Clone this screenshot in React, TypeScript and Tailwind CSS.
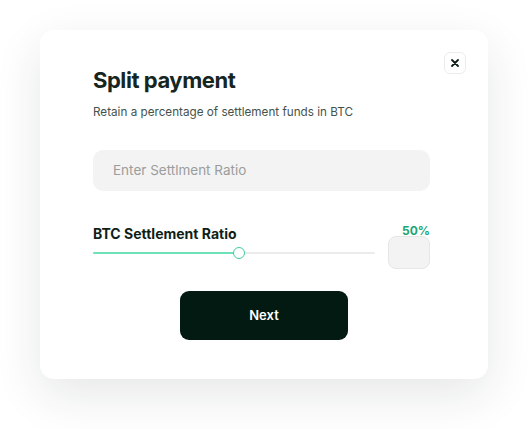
import React from 'react';

function CloseButton() {
  return (
    <button className="absolute right-[22px] top-[22px] flex h-[22px] w-[22px] items-center justify-center rounded-[6px] border border-[#ececec] bg-white">
      <svg width="8" height="8" viewBox="0 0 8 8" fill="none">
        <path d="M1 1L7 7M7 1L1 7" stroke="#0f1f18" strokeWidth="1.8" strokeLinecap="round" />
      </svg>
    </button>
  );
}

export default function App() {
  const ratio = 50;
  return (
    <div
      className="h-[429px] w-[528px] bg-white pl-[40px] pt-[30px]"
      style={{ fontFamily: 'Inter, "Noto Sans", sans-serif' }}
    >
      <div className="relative flex h-[349px] w-[448px] flex-col rounded-[14px] bg-white pl-[53px] pr-[58px] pt-[36px] shadow-[0_16px_48px_rgba(20,40,30,0.11)]">
        <CloseButton />
        <h1 className="text-[22px] font-bold leading-[28px] tracking-[-0.45px] text-[#16261f]">Split payment</h1>
        <p className="mt-[10px] text-[11.7px] leading-[16px] text-[#45524c]">
          Retain a percentage of settlement funds in BTC
        </p>
        <div className="mt-[30px] flex h-[41px] items-center rounded-[10px] bg-[#f3f3f3] px-[20px]">
          <span className="text-[13.5px] text-[#9a9d9c]">Enter Settlment Ratio</span>
        </div>
        <div className="mt-[30px] flex items-start gap-[13px]">
          <div className="flex flex-1 flex-col pt-[4px]">
            <span className="text-[14px] font-bold leading-[18px] text-[#0f1f18]">BTC Settlement Ratio</span>
            <div className="relative mt-[8px] h-[4px]">
              <div className="absolute left-0 right-0 top-[1px] h-[2px] rounded-full bg-[#ebebeb]" />
              <div className="absolute left-0 top-[1px] h-[2px] w-[146px] rounded-full bg-[#6fe1b7]" />
              <div className="absolute left-[146px] top-[-4px] h-[12px] w-[12px] -translate-x-1/2 rounded-full border-[1.5px] border-[#3fcf98] bg-white" />
            </div>
          </div>
          <div className="flex flex-col items-end pt-[3px]">
            <span className="text-[12px] font-bold leading-[14px] text-[#1ba673]">{ratio}%</span>
            <div className="mt-[-2px] h-[33px] w-[42px] rounded-[8px] border border-[#e6e6e6] bg-[#f3f3f3]" />
          </div>
        </div>
        <div className="ml-[5px] mt-[22px] flex justify-center">
          <button className="h-[49px] w-[168px] rounded-[9px] bg-[#031a12] text-[13px] font-semibold text-white">
            Next
          </button>
        </div>
      </div>
    </div>
  );
}
